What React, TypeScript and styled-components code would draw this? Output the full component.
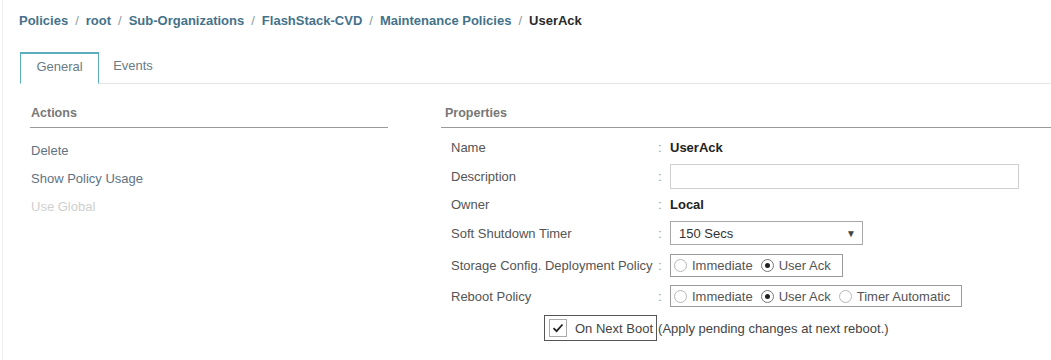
import React from 'react';
import styled, { createGlobalStyle } from 'styled-components';

const GlobalStyle = createGlobalStyle`
body {
  margin: 0;
  background: #ffffff;
  font-family: "Liberation Sans", Arial, sans-serif;
}
`

type RowProps = {
  label: string;
  h: number;
  children?: React.ReactNode;
};

function PropRow({label, h, children}: RowProps){
  return (
    <RowDiv $h={h}>
      <LabelSpan>{label}</LabelSpan>
      <ColonSpan>:</ColonSpan>
      <ValueDiv>{children}</ValueDiv>
    </RowDiv>
  );
}

function Radio({checked, label}: {checked?: boolean; label: string}){
  return (
    <RadioLabel>
      <RadioCircle $checked={checked} />
      {label}
    </RadioLabel>
  );
}

function App(){
  const crumbs = ['Policies', 'root', 'Sub-Organizations', 'FlashStack-CVD', 'Maintenance Policies'];
  return (
    <PageDiv>
      <GlobalStyle />
      <BreadcrumbDiv>
        {crumbs.map((c) => (
          <React.Fragment key={c}>
            <CrumbLink>{c}</CrumbLink>
            <CrumbSep>/</CrumbSep>
          </React.Fragment>
        ))}
        <CrumbCurrent>UserAck</CrumbCurrent>
      </BreadcrumbDiv>

      <TabBar>
        <Tab $active>General</Tab>
        <Tab>Events</Tab>
        <TabFill />
      </TabBar>

      <PanelsDiv>
        <ActionsPanel>
          <PanelHeader $pad={1}>Actions</PanelHeader>
          <ActionList>
            <ActionItem>Delete</ActionItem>
            <ActionItem>Show Policy Usage</ActionItem>
            <ActionItem $disabled>Use Global</ActionItem>
          </ActionList>
        </ActionsPanel>

        <PropsPanel>
          <PanelHeader $pad={4}>Properties</PanelHeader>
          <PropList>
            <PropRow label="Name" h={26}><BoldValue>UserAck</BoldValue></PropRow>
            <PropRow label="Description" h={33}><TextInput /></PropRow>
            <PropRow label="Owner" h={22}><BoldValue>Local</BoldValue></PropRow>
            <PropRow label="Soft Shutdown Timer" h={36}>
              <SelectBox>
                <span>150 Secs</span>
                <SelectArrow>▼</SelectArrow>
              </SelectBox>
            </PropRow>
            <PropRow label="Storage Config. Deployment Policy" h={29}>
              <RadioGroup $h={23}>
                <Radio label="Immediate" />
                <Radio checked label="User Ack" />
              </RadioGroup>
            </PropRow>
            <PropRow label="Reboot Policy" h={32}>
              <RadioGroup $h={22}>
                <Radio label="Immediate" />
                <Radio checked label="User Ack" />
                <Radio label="Timer Automatic" />
              </RadioGroup>
            </PropRow>
            <BootRow>
              <BootBox>
                <CheckSquare>
                  <svg width="12" height="10" viewBox="0 0 12 10">
                    <path d="M1.5 5.2 L4.6 8.2 L10.5 1.5" fill="none" stroke="#222" strokeWidth="1.8" />
                  </svg>
                </CheckSquare>
                On Next Boot
              </BootBox>
              <BootNote>(Apply pending changes at next reboot.)</BootNote>
            </BootRow>
          </PropList>
        </PropsPanel>
      </PanelsDiv>
    </PageDiv>
  );
}

const PageDiv = styled.div`
height: 360px;
box-sizing: border-box;
border-left: 1px solid #f0f0f0;
margin-left: 2px;
overflow: hidden;
`

const BreadcrumbDiv = styled.div`
display: flex;
align-items: center;
height: 40px;
padding-left: 16px;
font-size: 13px;
font-weight: bold;
`

const CrumbLink = styled.span`
color: #44728a;
`

const CrumbSep = styled.span`
color: #8a9aa4;
font-weight: normal;
margin: 0 7px;
`

const CrumbCurrent = styled.span`
color: #2a2a2a;
`

const TabBar = styled.div`
display: flex;
margin-top: 12px;
padding-left: 17px;
height: 32px;
`

const Tab = styled.div<{ $active?: boolean }>`
display: flex;
align-items: center;
justify-content: center;
box-sizing: border-box;
padding-bottom: 5px;
width: ${p => p.$active ? '79px' : '68px'};
font-size: 13px;
color: #6a7b86;
border-style: solid;
border-width: ${p => p.$active ? '2px 1px 1px 1px' : '0 0 1px 0'};
border-color: ${p => p.$active ? '#5aaebd #5aaebd transparent #5aaebd' : '#e4e4e4'};
`

const TabFill = styled.div`
flex: 1;
border-bottom: 1px solid #e4e4e4;
`

const PanelsDiv = styled.div`
display: flex;
margin-top: 15px;
`

const ActionsPanel = styled.div`
width: 358px;
margin-left: 27px;
`

const PropsPanel = styled.div`
flex: 1;
margin-left: 53px;
`

const PanelHeader = styled.div<{ $pad: number }>`
height: 28px;
display: flex;
align-items: center;
padding-left: ${p => p.$pad}px;
font-size: 12.5px;
font-weight: bold;
color: #777;
border-bottom: 1px solid #9a9a9a;
`

const ActionList = styled.div`
display: flex;
flex-direction: column;
padding-top: 8px;
`

const ActionItem = styled.div<{ $disabled?: boolean }>`
height: 28px;
display: flex;
align-items: center;
padding-left: 1px;
font-size: 13px;
color: ${p => p.$disabled ? '#cfcfcf' : '#5f7282'};
`

const PropList = styled.div`
display: flex;
flex-direction: column;
padding-top: 6px;
padding-left: 10px;
`

const RowDiv = styled.div<{ $h: number }>`
display: grid;
grid-template-columns: 207px 12px 1fr;
align-items: center;
height: ${p => p.$h}px;
font-size: 13px;
`

const LabelSpan = styled.span`
color: #555;
`

const ColonSpan = styled.span`
color: #999;
`

const ValueDiv = styled.div`
display: flex;
align-items: center;
`

const BoldValue = styled.span`
font-weight: bold;
color: #222;
`

const TextInput = styled.div`
width: 349px;
height: 25px;
box-sizing: border-box;
border: 1px solid #cfcfcf;
`

const SelectBox = styled.div`
width: 193px;
height: 24px;
box-sizing: border-box;
border: 1px solid #a8a8a8;
display: flex;
align-items: center;
justify-content: space-between;
padding: 0 6px 0 8px;
color: #333;
`

const SelectArrow = styled.span`
font-size: 10px;
color: #444;
`

const RadioGroup = styled.div<{ $h: number }>`
display: flex;
align-items: center;
gap: 8px;
height: ${p => p.$h}px;
box-sizing: border-box;
border: 1px solid #9a9a9a;
padding: 0 11px 0 3px;
color: #555;
`

const RadioLabel = styled.span`
display: flex;
align-items: center;
gap: 5px;
`

const RadioCircle = styled.span<{ $checked?: boolean }>`
width: 13px;
height: 13px;
box-sizing: border-box;
border-radius: 50%;
border: 1px solid ${p => p.$checked ? '#777' : '#b8b8b8'};
display: flex;
align-items: center;
justify-content: center;
&::after {
  content: '';
  width: 5px;
  height: 5px;
  border-radius: 50%;
  background: ${p => p.$checked ? '#222' : 'transparent'};
}
`

const BootRow = styled.div`
display: flex;
align-items: center;
height: 32px;
padding-left: 93px;
font-size: 13px;
color: #444;
`

const BootBox = styled.div`
display: flex;
align-items: center;
gap: 8px;
height: 26px;
box-sizing: border-box;
border: 1px solid #555;
padding: 0 3px 0 4px;
`

const CheckSquare = styled.span`
width: 18px;
height: 18px;
box-sizing: border-box;
border: 1px solid #aaa;
display: flex;
align-items: center;
justify-content: center;
`

const BootNote = styled.span`
margin-left: 1px;
`

export default App;
